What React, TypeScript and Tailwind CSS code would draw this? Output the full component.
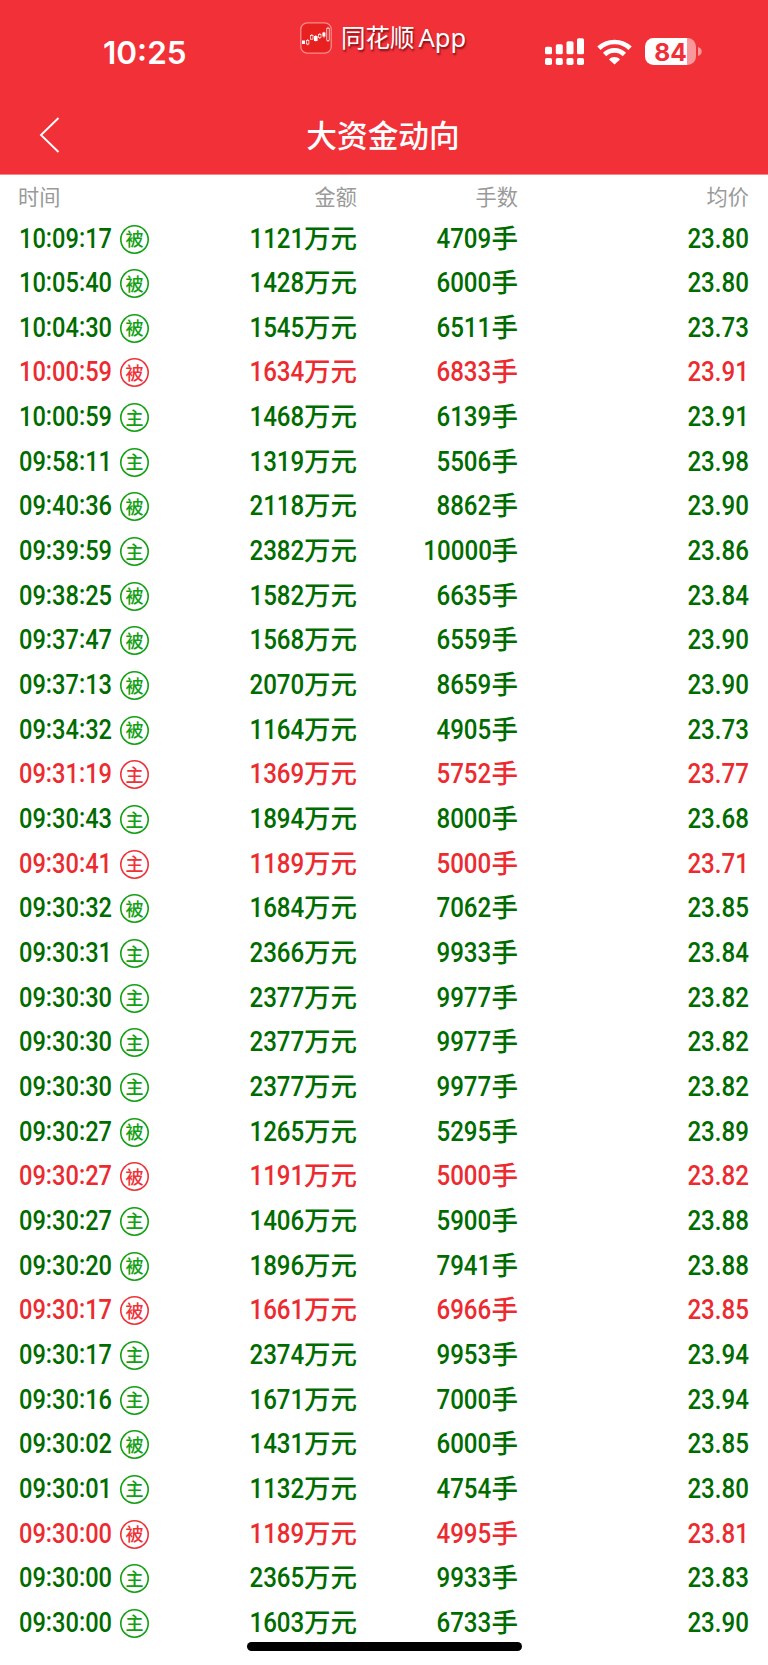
import React from "react";

type Row = [time: string, kind: "被" | "主", amount: number, lots: number, price: string, up?: boolean];

const rows: Row[] = [
  ["10:09:17", "被", 1121, 4709, "23.80"],
  ["10:05:40", "被", 1428, 6000, "23.80"],
  ["10:04:30", "被", 1545, 6511, "23.73"],
  ["10:00:59", "被", 1634, 6833, "23.91", true],
  ["10:00:59", "主", 1468, 6139, "23.91"],
  ["09:58:11", "主", 1319, 5506, "23.98"],
  ["09:40:36", "被", 2118, 8862, "23.90"],
  ["09:39:59", "主", 2382, 10000, "23.86"],
  ["09:38:25", "被", 1582, 6635, "23.84"],
  ["09:37:47", "被", 1568, 6559, "23.90"],
  ["09:37:13", "被", 2070, 8659, "23.90"],
  ["09:34:32", "被", 1164, 4905, "23.73"],
  ["09:31:19", "主", 1369, 5752, "23.77", true],
  ["09:30:43", "主", 1894, 8000, "23.68"],
  ["09:30:41", "主", 1189, 5000, "23.71", true],
  ["09:30:32", "被", 1684, 7062, "23.85"],
  ["09:30:31", "主", 2366, 9933, "23.84"],
  ["09:30:30", "主", 2377, 9977, "23.82"],
  ["09:30:30", "主", 2377, 9977, "23.82"],
  ["09:30:30", "主", 2377, 9977, "23.82"],
  ["09:30:27", "被", 1265, 5295, "23.89"],
  ["09:30:27", "被", 1191, 5000, "23.82", true],
  ["09:30:27", "主", 1406, 5900, "23.88"],
  ["09:30:20", "被", 1896, 7941, "23.88"],
  ["09:30:17", "被", 1661, 6966, "23.85", true],
  ["09:30:17", "主", 2374, 9953, "23.94"],
  ["09:30:16", "主", 1671, 7000, "23.94"],
  ["09:30:02", "被", 1431, 6000, "23.85"],
  ["09:30:01", "主", 1132, 4754, "23.80"],
  ["09:30:00", "被", 1189, 4995, "23.81", true],
  ["09:30:00", "主", 2365, 9933, "23.83"],
  ["09:30:00", "主", 1603, 6733, "23.90"],
];

const columns = "grid grid-cols-[142px_197px_161px_231px] pl-[18px] pr-[19px]";
const digits = "inline-block origin-right scale-x-[0.88] font-['Roboto',sans-serif] text-[27.4px] font-medium";

function AppIcon() {
  return (
    <svg className="h-8 w-8" viewBox="0 0 32 32">
      <rect x="0.8" y="0.8" width="30.4" height="30.4" rx="6.5" fill="#e6211f" stroke="#f98b8d" strokeWidth="1.3" />
      <g fill="#fff">
        <rect x="2" y="18.5" width="3" height="3.5" />
        <rect x="14" y="14" width="3.6" height="5" />
        <rect x="22.4" y="10.5" width="3" height="4" />
      </g>
      <g fill="none" stroke="#fff" strokeWidth="0.7">
        <path d="M7.7 17v1.4M7.7 22v1.3M11.8 12v1.6M15.8 13v6.5M19.8 11v1.4M19.8 15.6V17M24 9.8v6M28 4.8v1.4M28 18.5V20" />
        <rect x="6.5" y="18.4" width="2.4" height="3.6" />
        <rect x="10.6" y="13.6" width="2.4" height="3.6" />
        <rect x="18.6" y="12.4" width="2.4" height="3.2" />
        <rect x="26.8" y="6.2" width="2.4" height="12.3" />
      </g>
    </svg>
  );
}

function SignalIcon() {
  return (
    <svg className="h-[27px] w-[39px]" viewBox="0 0 39 27" fill="#fff">
      <rect x="0" y="8.7" width="7" height="7.6" rx="1.6" />
      <rect x="10.8" y="6.2" width="7" height="10.1" rx="1.6" />
      <rect x="21.5" y="3.2" width="7" height="13.1" rx="1.6" />
      <rect x="32" y="0.2" width="7" height="16.1" rx="1.6" />
      <rect x="0" y="20" width="7" height="7" rx="1.8" />
      <rect x="10.8" y="20" width="7" height="7" rx="1.8" />
      <rect x="21.5" y="20" width="7" height="7" rx="1.8" />
      <rect x="32" y="20" width="7" height="7" rx="1.8" />
    </svg>
  );
}

function WifiIcon() {
  return (
    <svg className="h-[26px] w-[35px]" viewBox="0 0 35 26">
      <g fill="none" stroke="#fff" strokeWidth="4.7">
        <path d="M1.9 9.3C10.5 0.9 24.5 0.9 33.1 9.3" />
        <path d="M7.6 15.5C13.1 10.1 21.9 10.1 27.4 15.5" />
      </g>
      <path d="M17.5 25.6l-5.5-5.2c3-3.1 8-3.1 11 0z" fill="#fff" />
    </svg>
  );
}

function Battery() {
  return (
    <div className="flex items-center gap-[2px]">
      <div className="flex h-[27px] w-[51px] items-center justify-center rounded-[8.5px] bg-[linear-gradient(90deg,#fff_42px,#f9989c_42px)] pt-px font-['Inter',sans-serif] text-[24.5px] leading-none font-bold text-[#f12f38]">
        84
      </div>
      <svg className="h-[9px] w-[4px]" viewBox="0 0 4 9">
        <path d="M0 0C5 1.5 5 7.5 0 9z" fill="#f9989c" />
      </svg>
    </div>
  );
}

function Time({ value }: { value: string }) {
  const [h, m, s] = value.split(":");
  const colon = <span className="inline-block -translate-y-[1.5px]">:</span>;
  return (
    <span className="ml-px inline-block origin-left scale-x-[0.862] font-['Roboto',sans-serif] text-[27.4px]">
      {h}
      {colon}
      {m}
      {colon}
      {s}
    </span>
  );
}

export default function App() {
  return (
    <main className="flex h-[1665px] w-[768px] flex-col overflow-hidden bg-white font-['Noto_Sans_CJK_SC',sans-serif]">
      <header className="h-[175px] shrink-0 border-b border-[#f8878b] bg-[#f23038] text-white">
        <div className="flex h-[93px] items-start">
          <div className="w-[300px] pt-[35px] pl-[103px] font-['Inter',sans-serif] text-[31.5px] leading-[36px] font-semibold">10:25</div>
          <div className="flex w-[245px] items-center pt-[22px]">
            <AppIcon />
            <span className="-mt-[3px] ml-[9px] text-[24.5px] leading-8 whitespace-nowrap [text-shadow:1px_2px_2px_#7c1016]">
              同花顺<span className="ml-1 font-['Noto_Sans',sans-serif] text-[25.5px]">App</span>
            </span>
          </div>
          <div className="mt-[38px] flex h-[27px] items-center">
            <SignalIcon />
            <div className="ml-[13px]"><WifiIcon /></div>
            <div className="ml-[13px]"><Battery /></div>
          </div>
        </div>
        <div className="grid h-[82px] grid-cols-3 items-center">
          <svg className="mt-[2px] ml-[39px] h-[36px] w-[21px]" viewBox="0 0 21 36" fill="none" stroke="#fff" strokeWidth="1.9">
            <path d="M19.5 1L2 18L19.5 35" />
          </svg>
          <h1 className="-ml-[2px] text-center text-[30.7px] leading-[40px] font-medium whitespace-nowrap">大资金动向</h1>
        </div>
      </header>

      <div className={columns + " h-[40px] shrink-0 items-center pt-[2px] text-[21.2px] text-[#9a9a9a]"}>
        <span>时间</span>
        <span className="text-right">金额</span>
        <span className="text-right">手数</span>
        <span className="text-right">均价</span>
      </div>

      <div className="-mt-[0.5px] flex flex-col">
        {rows.map(([time, kind, amount, lots, price, up], i) => (
          <div
            key={i}
            className={
              columns +
              " h-[44.66px] items-center text-[26.5px] leading-[44px] font-medium whitespace-nowrap " +
              (up ? "text-[#ec2b30]" : "text-[#006c00]")
            }
          >
            <div className="flex items-center">
              <span className="w-[102px]"><Time value={time} /></span>
              <span
                className={
                  "mt-[3px] flex h-[29px] w-[29px] items-center justify-center rounded-full pb-[2px] text-[18px] leading-none font-medium " +
                  (up
                    ? "text-[#ee3238] shadow-[inset_0_0_0_1.6px_#ee3238]"
                    : "text-[#12a012] shadow-[inset_0_0_0_1.6px_#12a012]")
                }
              >
                {kind}
              </span>
            </div>
            <div className="text-right"><span className={digits}>{amount}</span>万元</div>
            <div className="text-right"><span className={digits}>{lots}</span>手</div>
            <div className="text-right"><span className={digits}>{price}</span></div>
          </div>
        ))}
      </div>

      <div className="mx-auto mt-[-2px] h-[9px] w-[275px] shrink-0 rounded-full bg-black" />
    </main>
  );
}
